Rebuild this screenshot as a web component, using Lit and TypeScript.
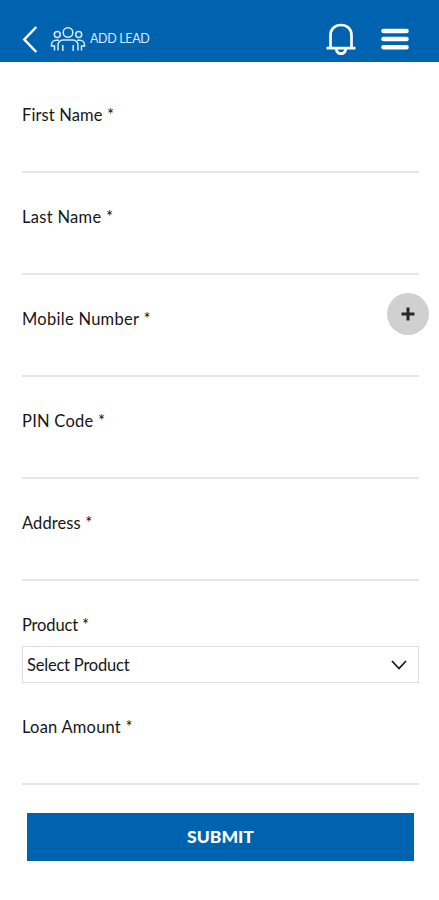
import { LitElement, html, css, nothing } from "lit";
import { customElement } from "lit/decorators.js";
import { styleMap } from "lit/directives/style-map.js";

interface Field {
  label: string;
  tracking: number;
  kind?: "select" | "phone";
}

const FIELDS: Field[] = [
  { label: "First Name", tracking: 0.12 },
  { label: "Last Name", tracking: 0.3 },
  { label: "Mobile Number", tracking: 0.28, kind: "phone" },
  { label: "PIN Code", tracking: 0.25 },
  { label: "Address", tracking: 0.1 },
  { label: "Product", tracking: -0.15, kind: "select" },
  { label: "Loan Amount", tracking: 0.22 },
];

@customElement("lead-header")
export class LeadHeader extends LitElement {
  static styles = css`
    :host {
      display: flex;
      align-items: center;
      box-sizing: border-box;
      height: 62px;
      padding: 16px 28px 0 22px;
      background: #0063b0;
      color: #fff;
    }
    svg {
      display: block;
      fill: none;
      stroke: currentColor;
      flex: none;
    }
    .people {
      margin-left: 12px;
      color: #d8eaff;
    }
    .title {
      flex: 1;
      margin-left: 4px;
      font-size: 12.5px;
      letter-spacing: -0.35px;
      line-height: 20px;
      color: #d8eaff;
      white-space: nowrap;
    }
    .bell {
      margin-right: 1px;
    }
    .menu {
      margin-left: 23px;
      margin-right: 1px;
    }
  `;

  render() {
    return html`
      <svg class="back" width="16" height="30" viewBox="0 0 16 30" stroke-width="2.5">
        <path d="M14.3 3 2.3 15.5 14.3 28" />
      </svg>
      <svg class="people" width="36" height="28" viewBox="0 0 36 28" stroke-width="1.5">
        <circle cx="18" cy="7.5" r="4.8" />
        <circle cx="7.3" cy="9.5" r="3" />
        <circle cx="28.7" cy="9.5" r="3" />
        <path d="M8 25.500v-5.500a5 5 0 0 1 5-5h10a5 5 0 0 1 5 5v5.500M12.800 26v-6M23.200 26v-6M9 15.200H6a4.500 4.500 0 0 0-4.500 4.500v1.300H4.500V25.500M27 15.200h3a4.500 4.500 0 0 1 4.500 4.500v1.300H31.500V25.500" />
      </svg>
      <span class="title">ADD LEAD</span>
      <svg class="bell" width="30" height="34" viewBox="0 0 30 34" stroke-width="2.700">
        <path d="M4.500 25V13.500C4.500 7 9 3 15 3s10.500 4 10.500 10.500V25M.5 26.200h29M10.300 27c.3 3.200 2 4.600 4.700 4.600s4.400-1.400 4.700-4.600" />
      </svg>
      <svg class="menu" width="30" height="24" viewBox="0 0 30 24" stroke-width="4.600" stroke-linecap="round">
        <path d="M3.500 4h23M3.500 12h23M3.500 20.200h23" />
      </svg>
    `;
  }
}

@customElement("app-root")
export class AppRoot extends LitElement {
  static styles = css`
    :host {
      display: block;
      min-height: 900px;
      background: #fff;
      color: #161616;
      font-family: Lato, "Open Sans", sans-serif;
    }
    .form {
      padding: 9px 20px 0 22px;
    }
    .field {
      position: relative;
      box-sizing: border-box;
      height: 102px;
      padding-top: 32px;
      border-bottom: 2px solid #e6e6e6;
    }
    .field.select {
      border-bottom: 0;
    }
    .label {
      display: block;
      font-size: 16.5px;
      line-height: 24px;
      white-space: nowrap;
    }
    .add {
      position: absolute;
      top: 18px;
      right: -10px;
      width: 42px;
      height: 42px;
      padding: 0;
      border: 0;
      border-radius: 50%;
      background: #d0d0d0;
      color: #292929;
      display: grid;
      place-items: center;
    }
    svg {
      fill: none;
      stroke: currentColor;
    }
    .picker {
      display: flex;
      align-items: center;
      justify-content: space-between;
      box-sizing: border-box;
      height: 37px;
      margin-top: 9px;
      padding: 0 11px 0 4px;
      border: 1.5px solid #dedede;
      font-size: 16.5px;
      letter-spacing: -0.2px;
    }
    .submit {
      display: block;
      width: 387px;
      height: 48px;
      margin: 28px 0 0 5px;
      padding: 0;
      border: 0;
      background: #0063b0;
      color: #fff;
      font: 900 17.5px/48px Lato, sans-serif;
    }
  `;

  private renderField(field: Field) {
    return html`
      <div class="field ${field.kind ?? ""}">
        <span class="label" style=${styleMap({ letterSpacing: `${field.tracking}px` })}>${field.label} *</span>
        ${field.kind === "phone"
          ? html`<button class="add" aria-label="Add number">
              <svg width="14" height="14" viewBox="0 0 14 14" stroke-width="3"><path d="M7 .5v13M.5 7h13" /></svg>
            </button>`
          : nothing}
        ${field.kind === "select"
          ? html`<div class="picker">
              <span>Select Product</span>
              <svg width="16" height="10" viewBox="0 0 16 10" stroke-width="1.700"><path d="M1 1l7 7.500L15 1" /></svg>
            </div>`
          : nothing}
      </div>
    `;
  }

  render() {
    return html`
      <lead-header></lead-header>
      <main class="form">
        ${FIELDS.map((field) => this.renderField(field))}
        <button class="submit">SUBMIT</button>
      </main>
    `;
  }
}
